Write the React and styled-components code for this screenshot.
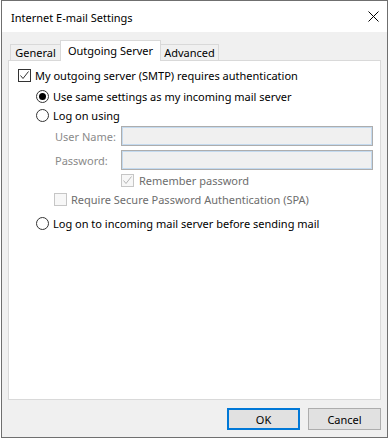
import React from "react";
import styled, { createGlobalStyle } from "styled-components";

const GlobalStyle = createGlobalStyle`
  html, body {
    margin: 0;
    padding: 0;
    background: #ffffff;
  }
  body {
    font-family: "Noto Sans", "Liberation Sans", sans-serif;
    font-size: 11px;
    color: #000;
  }
`;

const Window = styled.div`
  box-sizing: border-box;
  width: 387px;
  height: 438px;
  margin-left: 1px;
  border: 1px solid #6f6f6f;
  display: flex;
  flex-direction: column;
  background: #f0f0f0;
`;

const TitleBar = styled.div`
  height: 31px;
  background: #ffffff;
  display: flex;
  align-items: center;
  justify-content: space-between;
  padding: 0 8px 0 9px;
`;

const Title = styled.div`
  font-size: 11px;
  line-height: 14px;
  margin-top: 2px;
`;

const Body = styled.div`
  flex: 1;
  display: flex;
  flex-direction: column;
  padding: 8px 6px 0;
`;

const TabStrip = styled.div`
  display: flex;
  align-items: flex-end;
  height: 21px;
  margin: 0 0 -1px 2px;
  position: relative;
  z-index: 1;
`;

const Tab = styled.div`
  box-sizing: border-box;
  height: ${({ $active }) => ($active ? "21px" : "17px")};
  width: ${({ $w }) => $w}px;
  border: 1px solid #d9d9d9;
  border-bottom: ${({ $active }) => ($active ? "none" : "1px solid #d9d9d9")};
  margin-left: ${({ $first }) => ($first ? "0" : "-1px")};
  background: ${({ $active }) => ($active ? "#ffffff" : "#f0f0f0")};
  display: flex;
  align-items: center;
  justify-content: center;
  padding-top: ${({ $active }) => ($active ? "0" : "1px")};
  font-size: 11px;
  line-height: 14px;
`;

const Panel = styled.div`
  box-sizing: border-box;
  height: 340px;
  background: #ffffff;
  border: 1px solid #d9d9d9;
  padding: 8px 0 0 9px;
  display: flex;
  flex-direction: column;
`;

const Row = styled.div`
  display: flex;
  align-items: center;
  height: ${({ $h }) => $h || 13}px;
  margin-top: ${({ $mt }) => $mt || 0}px;
  padding-left: ${({ $indent }) => $indent || 0}px;
  color: ${({ $disabled }) => ($disabled ? "#6d6d6d" : "#000")};
  white-space: nowrap;
`;

const Label = styled.span`
  margin-left: ${({ $gap }) => $gap || 4}px;
  line-height: 14px;
  padding-top: 1px;
`;

const FieldLabel = styled.span`
  width: 66px;
  color: #8a8a8a;
  line-height: 14px;
  padding-top: 1px;
`;

const TextBox = styled.div`
  box-sizing: border-box;
  width: 252px;
  height: 20px;
  border: 1px solid #adadad;
  box-shadow: inset 0 0 0 1px #c4daef;
  background: #f0f0f0;
`;

const Box = styled.span`
  box-sizing: border-box;
  width: 13px;
  height: 13px;
  border: 1px solid ${({ $disabled }) => ($disabled ? "#c6c6c6" : "#333333")};
  background: ${({ $disabled }) => ($disabled ? "#f7f7f7" : "#ffffff")};
  display: inline-flex;
  align-items: center;
  justify-content: center;
  flex-shrink: 0;
`;

const Radio = styled.span`
  box-sizing: border-box;
  width: 13px;
  height: 13px;
  border-radius: 50%;
  border: 1px solid #333333;
  background: #ffffff;
  display: inline-flex;
  align-items: center;
  justify-content: center;
  flex-shrink: 0;
`;

const Dot = styled.span`
  width: 7px;
  height: 7px;
  border-radius: 50%;
  background: #000;
`;

const ButtonRow = styled.div`
  display: flex;
  justify-content: flex-end;
  gap: 8px;
  margin-top: 8px;
`;

const Button = styled.div`
  box-sizing: border-box;
  width: 73px;
  height: 22px;
  background: #e1e1e1;
  border: ${({ $primary }) => ($primary ? "2px solid #0078d7" : "1px solid #adadad")};
  display: flex;
  align-items: center;
  justify-content: center;
  font-size: 11px;
`;

function Check({ color = "#333" }) {
  return (
    <svg width="11" height="11" viewBox="0 0 11 11">
      <polyline points="1.5,5.5 4,8.5 9.5,1.5" fill="none" stroke={color} strokeWidth="1" />
    </svg>
  );
}

function CloseIcon() {
  return (
    <svg width="11" height="11" viewBox="0 0 11 11">
      <path d="M0.5 0.5 L10.5 10.5 M10.5 0.5 L0.5 10.5" stroke="#000" strokeWidth="1" fill="none" />
    </svg>
  );
}

export default function App() {
  return (
    <>
      <GlobalStyle />
      <Window>
        <TitleBar>
          <Title>Internet E-mail Settings</Title>
          <CloseIcon />
        </TitleBar>
        <Body>
          <TabStrip>
            <Tab $first $w={51}>General</Tab>
            <Tab $active $w={101}>Outgoing Server</Tab>
            <Tab $w={59}>Advanced</Tab>
          </TabStrip>
          <Panel>
            <Row $indent={0}>
              <Box><Check /></Box>
              <Label>My outgoing server (SMTP) requires authentication</Label>
            </Row>
            <Row $mt={8} $indent={18}>
              <Radio><Dot /></Radio>
              <Label>Use same settings as my incoming mail server</Label>
            </Row>
            <Row $mt={6} $indent={18}>
              <Radio />
              <Label>Log on using</Label>
            </Row>
            <Row $mt={4} $h={20} $indent={37}>
              <FieldLabel>User Name:</FieldLabel>
              <TextBox />
            </Row>
            <Row $mt={4} $h={20} $indent={37}>
              <FieldLabel>Password:</FieldLabel>
              <TextBox />
            </Row>
            <Row $mt={4} $indent={103} $disabled>
              <Box $disabled><Check color="#b5b5b5" /></Box>
              <Label $gap={5}>Remember password</Label>
            </Row>
            <Row $mt={6} $indent={36} $disabled>
              <Box $disabled />
              <Label $gap={4}>Require Secure Password Authentication (SPA)</Label>
            </Row>
            <Row $mt={11} $indent={18}>
              <Radio />
              <Label>Log on to incoming mail server before sending mail</Label>
            </Row>
          </Panel>
          <ButtonRow>
            <Button $primary>OK</Button>
            <Button>Cancel</Button>
          </ButtonRow>
        </Body>
      </Window>
    </>
  );
}
